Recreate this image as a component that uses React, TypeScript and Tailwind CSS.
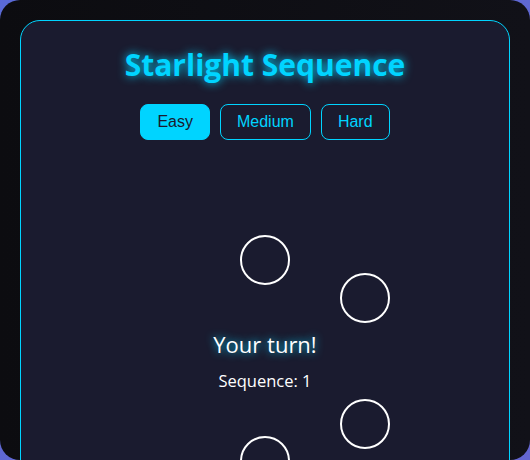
export default function App() {
  const stars = [
    { left: 219, top: 75 },
    { left: 319, top: 113 },
    { left: 319, top: 239 },
    { left: 219, top: 276 },
  ];

  return (
    <div className="min-h-screen bg-gradient-to-br from-[#5a6ad6] to-[#6466d0]">
      <div className="h-[460px] rounded-[20px] bg-gradient-to-r from-[#0c0c10] to-[#111118] p-5">
        <div className="h-[620px] rounded-[20px] border border-[#00d4ff] bg-[#1a1b2f] font-['Open_Sans',sans-serif] text-white">
          <h1 className="pt-[25px] text-center text-[30px] font-bold leading-[38px] text-[#00d4ff] [text-shadow:0_0_10px_#00d4ff]">
            Starlight Sequence
          </h1>
          <div className="mt-[20px] flex justify-center gap-[10px] font-['Liberation_Sans',Arial,sans-serif] text-[16px]">
            <button className="h-9 rounded-[8px] border border-[#00d4ff] bg-[#00d4ff] px-4 text-[#1a1a2e]">
              Easy
            </button>
            <button className="h-9 rounded-[8px] border border-[#00d4ff] bg-transparent px-4 text-[#00d4ff]">
              Medium
            </button>
            <button className="h-9 rounded-[8px] border border-[#00d4ff] bg-transparent px-4 text-[#00d4ff]">
              Hard
            </button>
          </div>
          <div className="relative mt-[20px] h-[400px]">
            {stars.map((s, i) => (
              <div
                key={i}
                className="absolute h-[50px] w-[50px] rounded-full border-2 border-white"
                style={{ left: s.left, top: s.top }}
              />
            ))}
            <div className="flex flex-col items-center pt-[170px]">
              <p className="text-[22px] leading-[28px] [text-shadow:0_0_8px_#00d4ff]">Your turn!</p>
              <p className="mt-[13px] text-[16.5px] leading-[20px]">Sequence: 1</p>
            </div>
          </div>
        </div>
      </div>
    </div>
  );
}
